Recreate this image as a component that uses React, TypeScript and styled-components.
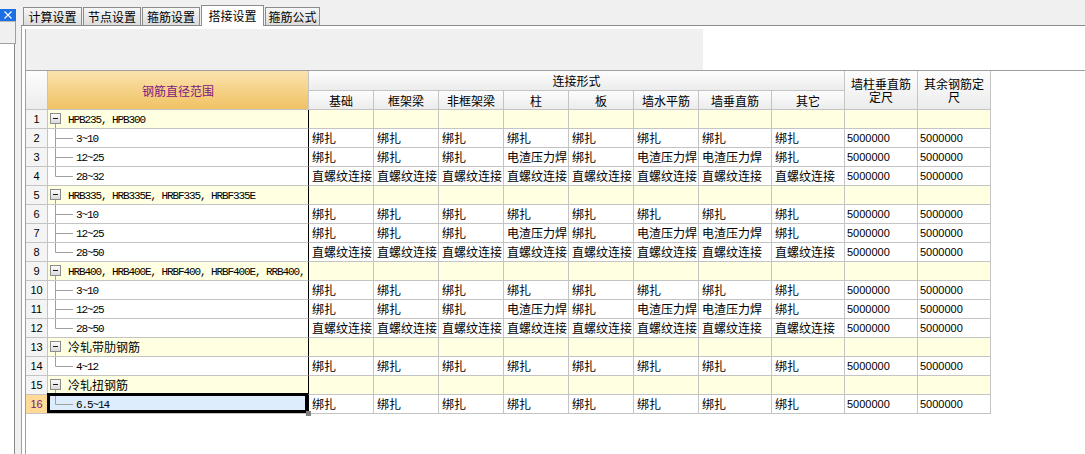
import styled, { createGlobalStyle } from 'styled-components';

const GlobalStyle = createGlobalStyle`
  html, body {
    margin: 0;
    padding: 0;
    background: #fff;
  }
`;

const LINE = '#c4c4c4';
const CJK = '"Noto Sans CJK SC", "Noto Sans", sans-serif';
const LATIN = '"Liberation Sans", Arial, sans-serif';
const MONO = '"Liberation Mono", "DejaVu Sans Mono", monospace';

const Root = styled.div`
  display: flex;
  width: 1085px;
  height: 454px;
  overflow: hidden;
  background: #fff;
  font-family: ${CJK};
  font-size: 12px;
  color: #000;
`;

const Dock = styled.div`
  width: 21px;
  flex: none;
  display: flex;
  flex-direction: column;
  padding-top: 9px;
  box-sizing: border-box;
  background: #f0f0f0;
`;

const CloseButton = styled.div`
  width: 16px;
  height: 12px;
  display: flex;
  align-items: center;
  justify-content: center;
  background: #1b6fe2;
`;

const DockHeader = styled.div`
  width: 16px;
  height: 23px;
  box-sizing: border-box;
  border-top: 1px solid #b9b9b9;
  border-right: 1px solid #a0a0a0;
  border-bottom: 1px solid #a0a0a0;
  background: #f0f0f0;
`;

const DockBody = styled.div`
  flex: 1;
  width: 15px;
  box-sizing: border-box;
  border-right: 1px solid #8a8a8a;
  background: #fff;
`;

const Main = styled.div`
  flex: 1;
  min-width: 0;
  display: flex;
  flex-direction: column;
`;

const TabBar = styled.div`
  height: 25px;
  flex: none;
  display: flex;
  align-items: flex-end;
  gap: 1px;
  padding-left: 2px;
  background: #f0f0f0;
  border-bottom: 1px solid #8c8c8c;
`;

const Tab = styled.div<{ $active?: boolean; $width: number }>`
  position: relative;
  z-index: ${(p) => (p.$active ? 1 : 0)};
  width: ${(p) => p.$width}px;
  height: ${(p) => (p.$active ? 21 : 18)}px;
  margin-bottom: ${(p) => (p.$active ? -1 : 0)}px;
  box-sizing: border-box;
  display: flex;
  align-items: center;
  justify-content: center;
  border: 1px solid #8c8c8c;
  border-bottom: none;
  background: ${(p) => (p.$active ? '#fff' : 'linear-gradient(#f7f7f7, #dcdcdc)')};
  font-size: 12px;
  line-height: 1;
  white-space: nowrap;
`;

const Body = styled.div`
  flex: 1;
  display: flex;
  border-left: 1px solid #a0a0a0;
  padding: 3px 0 0 3px;
  background: #fff;
`;

const Content = styled.div`
  flex: 1;
  display: flex;
  flex-direction: column;
  border-left: 1px solid #a0a0a0;
`;

const Toolbar = styled.div`
  width: 677px;
  height: 41px;
  flex: none;
  background: #f0f0f0;
`;

const GridArea = styled.div`
  flex: 1;
  border-top: 1px solid #a0a0a0;
`;

const Grid = styled.div`
  display: grid;
  grid-template-columns: 22px 261px repeat(6, 65px) repeat(4, 73px);
  grid-template-rows: 20px 19px;
  grid-auto-rows: 19px;
  width: max-content;
`;

const HeadCell = styled.div<{ $rows?: number; $cols?: number; $accent?: boolean }>`
  grid-row: span ${(p) => p.$rows ?? 1};
  grid-column: span ${(p) => p.$cols ?? 1};
  box-sizing: border-box;
  display: flex;
  align-items: center;
  justify-content: center;
  padding: 0 3px;
  border-right: 1px solid ${LINE};
  border-bottom: 1px solid ${LINE};
  background: ${(p) =>
    p.$accent ? 'linear-gradient(#fbe2ae, #f0c262)' : 'linear-gradient(#fdfdfd, #ececec)'};
  color: ${(p) => (p.$accent ? '#7d1780' : '#000')};
  font-size: 12px;
  line-height: 13px;
  text-align: center;
`;

const RowNum = styled.div<{ $selected?: boolean }>`
  box-sizing: border-box;
  border-right: 1px solid ${LINE};
  border-bottom: 1px solid ${LINE};
  background: ${(p) => (p.$selected ? '#ffda96' : '#f4f4f4')};
  color: ${(p) => (p.$selected ? '#7d1780' : '#000')};
  font-family: ${LATIN};
  font-size: 11px;
  line-height: 18px;
  text-align: center;
`;

const RangeCell = styled.div<{ $group?: boolean; $selected?: boolean }>`
  position: relative;
  box-sizing: border-box;
  display: flex;
  align-items: center;
  border-right: 1px solid #000;
  border-bottom: 1px solid ${LINE};
  background: ${(p) => (p.$group ? '#ffffe1' : p.$selected ? '#deedfd' : '#fff')};
  white-space: nowrap;
  overflow: visible;
`;

const TreeLabel = styled.span<{ $latin?: boolean }>`
  font-family: ${(p) => (p.$latin ? MONO : CJK)};
  font-size: ${(p) => (p.$latin ? 11 : 12)}px;
  letter-spacing: ${(p) => (p.$latin ? '-1.1px' : '0')};
  line-height: 18px;
  padding-top: ${(p) => (p.$latin ? 1 : 0)}px;
`;

const SelectionFrame = styled.div`
  position: absolute;
  left: -1px;
  top: -2px;
  right: 0;
  bottom: 0;
  border: 3px solid #000;
  pointer-events: none;
`;

const FillHandle = styled.div`
  position: absolute;
  right: -3px;
  bottom: -3px;
  width: 5px;
  height: 5px;
  background: #808080;
`;

const DataCell = styled.div<{ $group?: boolean; $numeric?: boolean }>`
  box-sizing: border-box;
  padding-left: ${(p) => (p.$numeric ? 2 : 3)}px;
  border-right: 1px solid ${LINE};
  border-bottom: 1px solid ${LINE};
  background: ${(p) => (p.$group ? '#ffffe1' : '#fff')};
  font-family: ${(p) => (p.$numeric ? LATIN : CJK)};
  font-size: ${(p) => (p.$numeric ? 11 : 12)}px;
  line-height: 18px;
  white-space: nowrap;
  overflow: hidden;
`;

function Toggle() {
  return (
    <svg width="20" height="18" viewBox="0 0 20 18" style={{ flex: 'none' }}>
      <defs>
        <linearGradient id="tg" x1="0" y1="0" x2="0" y2="1">
          <stop offset="0" stopColor="#ffffff" />
          <stop offset="1" stopColor="#d8d8d8" />
        </linearGradient>
      </defs>
      <line x1="7.5" y1="14" x2="7.5" y2="18" stroke="#a0a0a0" />
      <rect x="2.5" y="3.5" width="10" height="10" fill="url(#tg)" stroke="#8c8c8c" />
      <line x1="5" y1="8.5" x2="10" y2="8.5" stroke="#1a1a1a" />
    </svg>
  );
}

function Branch({ last }: { last?: boolean }) {
  return (
    <svg width="28" height="18" viewBox="0 0 28 18" style={{ flex: 'none' }}>
      <line x1="7.5" y1="0" x2="7.5" y2={last ? 9.5 : 18} stroke="#a0a0a0" />
      <line x1="7.5" y1="9.5" x2="25" y2="9.5" stroke="#a0a0a0" />
    </svg>
  );
}

const B = '绑扎';
const W = '电渣压力焊';
const Z = '直螺纹连接';
const SMALL = [B, B, B, B, B, B, B, B];
const MID = [B, B, B, W, B, W, W, B];
const BIG = [Z, Z, Z, Z, Z, Z, Z, Z];

type Row = { label: string; group?: boolean; last?: boolean; latin?: boolean; cells?: string[] };

const rows: Row[] = [
  { label: 'HPB235, HPB300', group: true, latin: true },
  { label: '3~10', latin: true, cells: SMALL },
  { label: '12~25', latin: true, cells: MID },
  { label: '28~32', latin: true, last: true, cells: BIG },
  { label: 'HRB335, HRB335E, HRBF335, HRBF335E', group: true, latin: true },
  { label: '3~10', latin: true, cells: SMALL },
  { label: '12~25', latin: true, cells: MID },
  { label: '28~50', latin: true, last: true, cells: BIG },
  { label: 'HRB400, HRB400E, HRBF400, HRBF400E, RRB400,', group: true, latin: true },
  { label: '3~10', latin: true, cells: SMALL },
  { label: '12~25', latin: true, cells: MID },
  { label: '28~50', latin: true, last: true, cells: BIG },
  { label: '冷轧带肋钢筋', group: true },
  { label: '4~12', latin: true, last: true, cells: SMALL },
  { label: '冷轧扭钢筋', group: true },
  { label: '6.5~14', latin: true, last: true, cells: SMALL },
];

const tabs = [
  { name: '计算设置', width: 59 },
  { name: '节点设置', width: 58 },
  { name: '箍筋设置', width: 58 },
  { name: '搭接设置', width: 63, active: true },
  { name: '箍筋公式', width: 55 },
];

const subHeads = ['基础', '框架梁', '非框架梁', '柱', '板', '墙水平筋', '墙垂直筋', '其它'];

const SELECTED = 15;

export default function App() {
  return (
    <Root>
      <GlobalStyle />
      <Dock>
        <CloseButton>
          <svg width="8" height="8" viewBox="0 0 8 8">
            <path d="M0.5 0.5 L7.5 7.5 M7.5 0.5 L0.5 7.5" stroke="#fff" strokeWidth="1.1" />
          </svg>
        </CloseButton>
        <DockHeader />
        <DockBody />
      </Dock>
      <Main>
        <TabBar>
          {tabs.map((t) => (
            <Tab key={t.name} $active={t.active} $width={t.width}>
              {t.name}
            </Tab>
          ))}
        </TabBar>
        <Body>
          <Content>
            <Toolbar />
            <GridArea>
              <Grid>
                <HeadCell $rows={2} />
                <HeadCell $rows={2} $accent>
                  钢筋直径范围
                </HeadCell>
                <HeadCell $cols={8}>连接形式</HeadCell>
                <HeadCell $rows={2}>墙柱垂直筋定尺</HeadCell>
                <HeadCell $rows={2}>其余钢筋定尺</HeadCell>
                {subHeads.map((h) => (
                  <HeadCell key={h}>{h}</HeadCell>
                ))}
                {rows.map((r, i) => {
                  const selected = i === SELECTED;
                  const cells = r.cells ?? Array(8).fill('');
                  const lengths = r.cells ? ['5000000', '5000000'] : ['', ''];
                  return [
                    <RowNum key={`n${i}`} $selected={selected}>
                      {i + 1}
                    </RowNum>,
                    <RangeCell key={`r${i}`} $group={r.group} $selected={selected}>
                      {r.group ? <Toggle /> : <Branch last={r.last} />}
                      <TreeLabel $latin={r.latin}>{r.label}</TreeLabel>
                      {selected && (
                        <>
                          <SelectionFrame />
                          <FillHandle />
                        </>
                      )}
                    </RangeCell>,
                    ...cells.map((c, j) => (
                      <DataCell key={`d${i}-${j}`} $group={r.group}>
                        {c}
                      </DataCell>
                    )),
                    ...lengths.map((c, j) => (
                      <DataCell key={`l${i}-${j}`} $group={r.group} $numeric>
                        {c}
                      </DataCell>
                    )),
                  ];
                })}
              </Grid>
            </GridArea>
          </Content>
        </Body>
      </Main>
    </Root>
  );
}
